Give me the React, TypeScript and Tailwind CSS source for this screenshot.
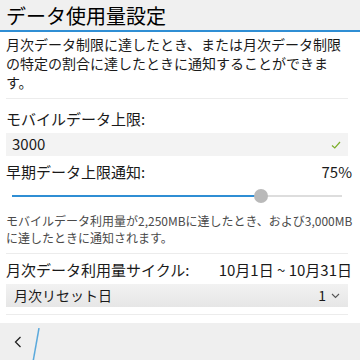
import React from 'react';

const font = { fontFamily: '"Noto Sans CJK JP", "Noto Sans", sans-serif' };

export default function App() {
  return (
    <div className="w-[360px] h-[360px] bg-white flex flex-col overflow-hidden text-[#1a1a1a]" style={font}>
      {/* Title bar */}
      <div className="h-[32px] bg-[#f0f0f0] border-b-2 border-[#2f8ed4] flex items-center px-[6px]">
        <span className="text-[20px] leading-none text-black mt-[2px]">データ使用量設定</span>
      </div>

      <div className="flex-1 flex flex-col px-[6px]">
        <p className="text-[14px] leading-[19px] pt-[3px] pb-[6px]">
          月次データ制限に達したとき、または月次データ制限の特定の割合に達したときに通知することができます。
        </p>
        <div className="h-px bg-[#ececec] mr-[6px]" />

        <div className="text-[15px] leading-[20px] mt-[10px]">モバイルデータ上限:</div>
        <div className="mt-[4px] mr-[6px] h-[23px] bg-[#f3f3f3] flex items-center justify-between px-[6px]">
          <span className="text-[15px]">3000</span>
          <svg width="10" height="8" viewBox="0 0 10 8" className="mr-[1px]">
            <path d="M1 4.5 L3.8 7 L9 1" fill="none" stroke="#7cae2a" strokeWidth="1.2" />
          </svg>
        </div>

        <div className="flex justify-between items-center mt-[6px] text-[15px] leading-[20px]">
          <span>早期データ上限通知:</span>
          <span className="mr-[2px]">75%</span>
        </div>

        {/* Slider */}
        <div className="relative h-[20px] mt-[4px] mx-[6px] mr-[12px] flex items-center">
          <div className="flex-1 flex h-[2px]">
            <div className="w-[248px] bg-[#2f8ed4]" />
            <div className="flex-1 bg-[#dddddd]" />
          </div>
          <div className="absolute left-[242px] top-[3px] w-[14px] h-[14px] rounded-full bg-[#b9b9b9]" />
        </div>

        <p className="text-[12px] leading-[17px] text-[#4a4a4a] mt-[6px] pb-[7px]">
          モバイルデータ利用量が2,250MBに達したとき、および3,000MBに達したときに通知されます。
        </p>
        <div className="h-px bg-[#ececec] mr-[6px]" />

        <div className="flex justify-between items-center mt-[6px] text-[15px] leading-[20px]">
          <span>月次データ利用量サイクル:</span>
          <span className="mr-[2px]">10月1日 ~ 10月31日</span>
        </div>
        <div className="mt-[4px] mr-[6px] h-[23px] bg-gradient-to-b from-[#f2f2f2] to-[#e6e6e6] flex items-center justify-between px-[8px]">
          <span className="text-[14px]">月次リセット日</span>
          <span className="flex items-center gap-[5px] text-[14px]">
            1
            <svg width="9" height="6" viewBox="0 0 9 6">
              <path d="M1 1 L4.5 4.5 L8 1" fill="none" stroke="#555" strokeWidth="1.1" />
            </svg>
          </span>
        </div>
        <div className="h-px bg-[#ececec] mr-[6px] mt-[7px]" />
      </div>

      {/* Bottom bar */}
      <div className="h-[37px] bg-[#efefef] relative flex items-center px-[14px]">
        <svg width="8" height="12" viewBox="0 0 8 12">
          <path d="M6.5 1 L1.5 6 L6.5 11" fill="none" stroke="#222" strokeWidth="1.3" />
        </svg>
        <svg width="8" height="34" viewBox="0 0 8 34" className="ml-[10px] mt-[6px]">
          <path d="M7 0 L1 34" fill="none" stroke="#5aa9dc" strokeWidth="1.5" />
        </svg>
      </div>
    </div>
  );
}
